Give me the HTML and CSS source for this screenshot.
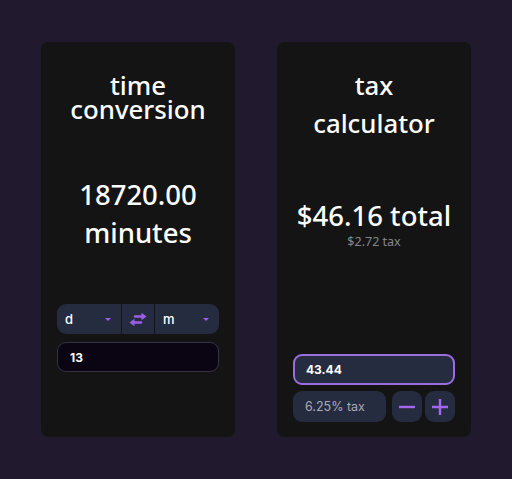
FILE: index.html
```html
<!DOCTYPE html>
<html>
<head>
<meta charset="utf-8">
<link rel="stylesheet" href="styles.css">
</head>
<body>
<main class="board">
  <section class="card card-time">
    <h1 class="title title-tight">time<br>conversion</h1>
    <p class="result">18720.00<br>minutes</p>
    <div class="unit-row">
      <div class="select"><span>d</span><span class="caret"></span></div>
      <div class="swap">
        <svg width="20" height="15" viewBox="0 0 20 15">
          <path d="M7 4.5H14" stroke="#9c5fe8" stroke-width="2.5" stroke-linecap="round"/>
          <path d="M13.5 0.8L18.5 4.5L13.5 8.2Z" fill="#9c5fe8"/>
          <path d="M13 10.5H6" stroke="#9c5fe8" stroke-width="2.5" stroke-linecap="round"/>
          <path d="M6.5 6.8L1.5 10.5L6.5 14.2Z" fill="#9c5fe8"/>
        </svg>
      </div>
      <div class="select"><span>m</span><span class="caret"></span></div>
    </div>
    <div class="field field-dark">13</div>
  </section>
  <section class="card card-tax">
    <h1 class="title title-loose">tax<br>calculator</h1>
    <p class="total">$46.16 total</p>
    <p class="sub">$2.72 tax</p>
    <div class="tax-controls">
      <div class="field field-active">43.44</div>
      <div class="rate-row">
        <div class="rate">6.25% tax</div>
        <button class="step">
          <svg width="18" height="18" viewBox="0 0 18 18"><path d="M1 9H17" stroke="#a366ee" stroke-width="2.4"/></svg>
        </button>
        <button class="step">
          <svg width="18" height="18" viewBox="0 0 18 18"><path d="M1 9H17M9 1V17" stroke="#a366ee" stroke-width="2.4"/></svg>
        </button>
      </div>
    </div>
  </section>
</main>
</body>
</html>
```

FILE: styles.css
```css
* { box-sizing: border-box; }
html, body { margin: 0; padding: 0; }
body {
  background: #211a2e;
  width: 512px;
  height: 479px;
  font-family: "Noto Sans", "DejaVu Sans", sans-serif;
  color: #ffffff;
}
.board {
  display: flex;
  gap: 42px;
  padding: 42px 41px 0 41px;
}
.card {
  width: 194px;
  height: 395px;
  background: #141414;
  border-radius: 7px;
  display: flex;
  flex-direction: column;
  padding: 0 16px;
}
.title {
  margin: 0;
  font-weight: 500;
  font-size: 25.8px;
  text-align: center;
}
.title-tight { line-height: 24px; margin-top: 31px; }
.title-loose { line-height: 38px; margin-top: 24px; }
.result {
  margin: 55px 0 0 0;
  font-weight: 500;
  font-size: 27.5px;
  line-height: 38px;
  text-align: center;
}
.unit-row {
  margin-top: 52px;
  height: 30px;
  display: flex;
  background: #262c40;
  border-radius: 9px;
  overflow: hidden;
}
.select {
  flex: 1;
  display: flex;
  align-items: center;
  justify-content: space-between;
  padding: 0 10px 0 8px;
  font-size: 13px;
  font-family: "Inter", "Noto Sans", sans-serif;
  font-weight: 500;
}
.caret {
  width: 0; height: 0;
  border-left: 3px solid transparent;
  border-right: 3px solid transparent;
  border-top: 3px solid #9c5fe8;
}
.swap {
  width: 34px;
  display: flex;
  align-items: center;
  justify-content: center;
  border-left: 1px solid #141418;
  border-right: 1px solid #141418;
}
.field {
  height: 31px;
  border-radius: 9px;
  display: flex;
  align-items: center;
  padding-left: 12px;
  font-family: "Inter", "Noto Sans", sans-serif;
  font-weight: 700;
  font-size: 12px;
}
.field-dark {
  margin-top: 8px;
  height: 30px;
  background: #0b0412;
  border: 1px solid #363246;
}
.total {
  margin: 56px 0 0 0;
  font-weight: 500;
  font-size: 27.5px;
  line-height: 36px;
  text-align: center;
}
.sub {
  margin: 0;
  font-size: 12.5px;
  line-height: 16px;
  text-align: center;
  color: #85858c;
}
.tax-controls {
  margin-top: auto;
  margin-bottom: 15px;
  display: flex;
  flex-direction: column;
  gap: 6px;
}
.field-active {
  background: #262c40;
  border: 2px solid #9b6ddf;
  padding-left: 11px;
}
.rate-row {
  display: flex;
  gap: 3px;
  height: 31px;
}
.rate {
  width: 95px;
  margin-right: 3px;
  background: #262c40;
  border-radius: 9px;
  display: flex;
  align-items: center;
  padding-left: 12px;
  font-family: "Inter", "Noto Sans", sans-serif;
  font-size: 12.5px;
  color: #a9aab8;
}
.step {
  width: 31px;
  height: 31px;
  border: 0;
  padding: 0;
  background: #262c40;
  border-radius: 9px;
  display: flex;
  align-items: center;
  justify-content: center;
}
```
